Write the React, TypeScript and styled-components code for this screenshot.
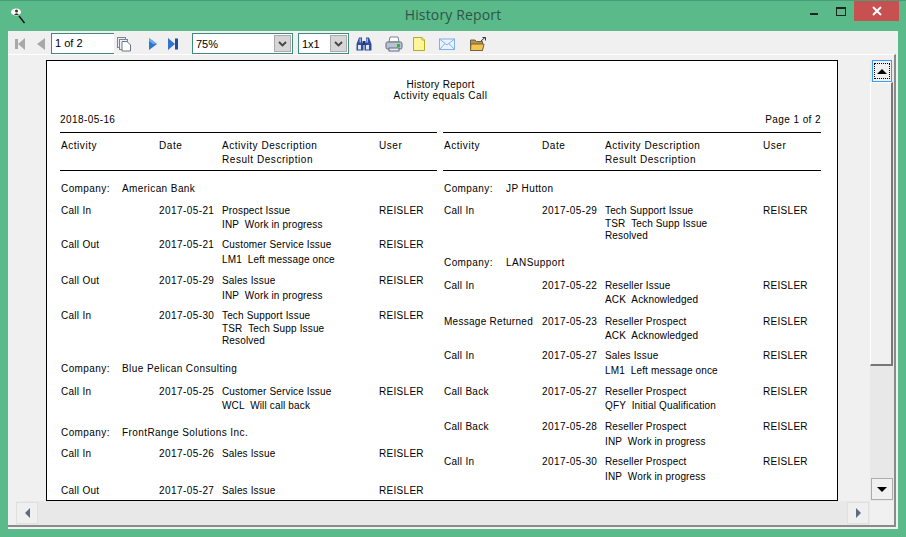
import React from 'react';
import styled, { createGlobalStyle } from 'styled-components';

const GlobalStyle = createGlobalStyle`
  html, body {
    margin: 0;
    padding: 0;
    background: #5aba8a;
  }
`;

const Window = styled.div`
  width: 906px;
  height: 537px;
  box-sizing: border-box;
  background: #5aba8a;
  border-top: 1px solid #4a9c76;
  display: flex;
  flex-direction: column;
  overflow: hidden;
  font-family: 'Liberation Sans', Arial, sans-serif;
`;

const TitleBar = styled.div`
  height: 30px;
  flex: none;
  display: grid;
  grid-template-columns: 1fr auto 1fr;
  position: relative;
`;

const AppIcon = styled.div`
  padding: 7px 0 0 9px;
`;

const Title = styled.div`
  font-family: 'Open Sans', 'Noto Sans', sans-serif;
  font-size: 14px;
  letter-spacing: 0.15px;
  line-height: 28px;
  color: #2f5547;
`;

const Controls = styled.div`
  display: flex;
  justify-content: flex-end;
  padding-right: 7px;
`;

const ControlButton = styled.div<{ $w: number; $close?: boolean }>`
  width: ${p => p.$w}px;
  height: 20px;
  display: flex;
  align-items: center;
  justify-content: center;
  background: ${p => (p.$close ? '#c75050' : 'transparent')};
`;

const Client = styled.div`
  width: 890px;
  height: 498px;
  margin-left: 8px;
  background: #f0f0f0;
  display: flex;
  flex-direction: column;
`;

const Toolbar = styled.div`
  height: 24px;
  flex: none;
  box-sizing: border-box;
  padding: 2px 0 1px 6px;
  display: flex;
  align-items: center;
`;

const ToolIcon = styled.svg<{ $ml: number }>`
  margin-left: ${p => p.$ml}px;
  flex: none;
  display: block;
`;

const PageInput = styled.div`
  width: 63px;
  height: 21px;
  margin-left: 4px;
  box-sizing: border-box;
  background: #fff;
  border: 1px solid #3f8a7a;
  border-right: none;
  font-size: 11px;
  line-height: 19px;
  padding-left: 3px;
  color: #000;
`;

const Combo = styled.div<{ $w: number; $ml: number }>`
  width: ${p => p.$w}px;
  height: 21px;
  margin-left: ${p => p.$ml}px;
  box-sizing: border-box;
  background: #fff;
  border: 1px solid #3f8a7a;
  display: flex;
  align-items: center;
  justify-content: space-between;
  padding: 0 1px 0 3px;
  font-size: 11px;
  color: #000;
`;

const ComboArrow = styled.div`
  width: 17px;
  height: 17px;
  box-sizing: border-box;
  background: #d6d6d6;
  border: 1px solid #ababab;
  display: flex;
  align-items: center;
  justify-content: center;
`;

const Main = styled.div`
  width: 886px;
  height: 470px;
  flex: none;
  border-right: 2px solid #8a8a8a;
  border-bottom: 2px solid #8a8a8a;
  display: grid;
  grid-template-columns: 862px 24px;
  grid-template-rows: 446px 24px;
  border-top: 1px solid #fff;
  box-sizing: content-box;
  margin-top: -1px;
`;

const Viewport = styled.div`
  padding: 5px 0 0 38px;
  box-sizing: border-box;
  overflow: hidden;
`;

const Page = styled.div`
  width: 792px;
  height: 441px;
  box-sizing: border-box;
  border: 1px solid #000;
  background: #fff;
  overflow: hidden;
  padding: 18px 0 0 13px;
  color: #000;
  font-size: 10px;
  letter-spacing: 0.42px;
`;

const ReportTitle = styled.div<{ $spacing: number }>`
  width: 761px;
  text-align: center;
  line-height: 11px;
  letter-spacing: ${p => p.$spacing}px;
`;

const MetaRow = styled.div`
  width: 761px;
  display: flex;
  justify-content: space-between;
  line-height: 12px;
  margin-top: 13px;
`;

const Columns = styled.div`
  display: grid;
  grid-template-columns: 377px 378px;
  column-gap: 6px;
  margin-top: 6px;
`;

const Column = styled.div``;

const ColumnHead = styled.div`
  border-top: 1px solid #000;
  border-bottom: 1px solid #000;
  padding-top: 7px;
  height: 30px;
  letter-spacing: 0.55px;
`;

const Rows = styled.div`
  padding-top: 12px;
`;

const Row = styled.div<{ $h: number; $desc: number }>`
  height: ${p => p.$h}px;
  display: grid;
  grid-template-columns: 98px 63px ${p => p.$desc}px 1fr;
  padding-left: 1px;
  line-height: 12px;
  white-space: pre;
`;

const ActivityCell = styled.div`
  letter-spacing: 0.28px;
`;

const UserCell = styled.div`
  letter-spacing: 0.3px;
`;

const DescriptionCell = styled.div`
  letter-spacing: 0.15px;
`;

const Line = styled.div<{ $offset?: number }>`
  margin-top: ${p => (p.$offset ? p.$offset - 12 : 0)}px;
`;

const CompanyRow = styled.div<{ $h: number }>`
  height: ${p => p.$h}px;
  display: flex;
  padding-left: 1px;
  line-height: 12px;
`;

const CompanyLabel = styled.div<{ $w: number }>`
  width: ${p => p.$w}px;
  flex: none;
`;

const ScrollV = styled.div`
  display: flex;
  flex-direction: column;
  padding-top: 5px;
  padding-bottom: 1px;
  box-sizing: border-box;
  background: linear-gradient(#f0f0f0 5px, #e8e8e8 5px);
`;

const ScrollButton = styled.div<{ $focus?: boolean; $inset?: number }>`
  height: 22px;
  flex: none;
  box-sizing: border-box;
  margin: 0 ${p => p.$inset ?? 1}px 0 ${p => p.$inset ?? 1}px;
  background: #f0f0f0;
  border: 1px solid ${p => (p.$focus ? '#3a9bf4' : '#acacac')};
  display: flex;
  align-items: center;
  justify-content: center;
`;

const FocusRing = styled.div`
  width: 16px;
  height: 16px;
  box-sizing: border-box;
  border: 1px dotted #000;
  display: flex;
  align-items: center;
  justify-content: center;
`;

const Thumb = styled.div`
  height: 284px;
  flex: none;
  margin-right: 1px;
  box-sizing: border-box;
  background: #f0f0f0;
  border-top: 1px solid #fff;
  border-left: 1px solid #fff;
  border-right: 2px solid #777;
  border-bottom: 2px solid #777;
`;

const Track = styled.div`
  flex: 1;
`;

const ScrollH = styled.div`
  margin-left: 8px;
  padding-top: 1px;
  box-sizing: border-box;
  background: #e8e8e8;
  display: flex;
  justify-content: space-between;
  padding-right: 1px;
`;

const HButton = styled.div`
  width: 22px;
  height: 22px;
  box-sizing: border-box;
  border: 1px solid #e0e0e0;
  background: #efefef;
  display: flex;
  align-items: center;
  justify-content: center;
`;

const Arrow = styled.div<{ $dir: 'up' | 'down' | 'left' | 'right' }>`
  width: 0;
  height: 0;
  ${p =>
    p.$dir === 'up'
      ? 'border-left: 5px solid transparent; border-right: 5px solid transparent; border-bottom: 5px solid #000;'
      : p.$dir === 'down'
      ? 'border-left: 5px solid transparent; border-right: 5px solid transparent; border-top: 5px solid #000;'
      : p.$dir === 'left'
      ? 'border-top: 5px solid transparent; border-bottom: 5px solid transparent; border-right: 5px solid #5c6a86;'
      : 'border-top: 5px solid transparent; border-bottom: 5px solid transparent; border-left: 5px solid #5c6a86;'}
`;

const Corner = styled.div``;

type Item =
  | { company: string; h: number }
  | { activity: string; date: string; lines: [string, number][]; h: number };

const leftRows: Item[] = [
  { company: 'American Bank', h: 22 },
  { activity: 'Call In', date: '2017-05-21', lines: [['Prospect Issue', 0], ['INP  Work in progress', 14]], h: 34 },
  { activity: 'Call Out', date: '2017-05-21', lines: [['Customer Service Issue', 0], ['LM1  Left message once', 15]], h: 36 },
  { activity: 'Call Out', date: '2017-05-29', lines: [['Sales Issue', 0], ['INP  Work in progress', 15]], h: 35 },
  { activity: 'Call In', date: '2017-05-30', lines: [['Tech Support Issue', 0], ['TSR  Tech Supp Issue', 13], ['Resolved', 12]], h: 53 },
  { company: 'Blue Pelican Consulting', h: 23 },
  { activity: 'Call In', date: '2017-05-25', lines: [['Customer Service Issue', 0], ['WCL  Will call back', 14]], h: 41 },
  { company: 'FrontRange Solutions Inc.', h: 21 },
  { activity: 'Call In', date: '2017-05-26', lines: [['Sales Issue', 0]], h: 37 },
  { activity: 'Call Out', date: '2017-05-27', lines: [['Sales Issue', 0]], h: 12 },
];

const rightRows: Item[] = [
  { company: 'JP Hutton', h: 22 },
  { activity: 'Call In', date: '2017-05-29', lines: [['Tech Support Issue', 0], ['TSR  Tech Supp Issue', 13], ['Resolved', 12]], h: 52 },
  { company: 'LANSupport', h: 23 },
  { activity: 'Call In', date: '2017-05-22', lines: [['Reseller Issue', 0], ['ACK  Acknowledged', 14]], h: 36 },
  { activity: 'Message Returned', date: '2017-05-23', lines: [['Reseller Prospect', 0], ['ACK  Acknowledged', 14]], h: 34 },
  { activity: 'Call In', date: '2017-05-27', lines: [['Sales Issue', 0], ['LM1  Left message once', 15]], h: 36 },
  { activity: 'Call Back', date: '2017-05-27', lines: [['Reseller Prospect', 0], ['QFY  Initial Qualification', 14]], h: 35 },
  { activity: 'Call Back', date: '2017-05-28', lines: [['Reseller Prospect', 0], ['INP  Work in progress', 15]], h: 35 },
  { activity: 'Call In', date: '2017-05-30', lines: [['Reseller Prospect', 0], ['INP  Work in progress', 15]], h: 30 },
];

const ReportColumn: React.FC<{ rows: Item[]; desc: number; label: number }> = ({ rows, desc, label }) => (
  <Column>
    <ColumnHead>
      <Row $h={14} $desc={desc}>
        <div>Activity</div>
        <div>Date</div>
        <div>Activity Description</div>
        <div>User</div>
      </Row>
      <Row $h={14} $desc={desc}>
        <div />
        <div />
        <div>Result Description</div>
        <div />
      </Row>
    </ColumnHead>
    <Rows>
      {rows.map((r, i) =>
        'company' in r ? (
          <CompanyRow key={i} $h={r.h}>
            <CompanyLabel $w={label}>Company:</CompanyLabel>
            <div>{r.company}</div>
          </CompanyRow>
        ) : (
          <Row key={i} $h={r.h} $desc={desc}>
            <ActivityCell>{r.activity}</ActivityCell>
            <div>{r.date}</div>
            <DescriptionCell>
              {r.lines.map(([text, offset], j) => (
                <Line key={j} $offset={offset}>{text}</Line>
              ))}
            </DescriptionCell>
            <UserCell>REISLER</UserCell>
          </Row>
        )
      )}
    </Rows>
  </Column>
);

const Chevron = () => (
  <svg width="9" height="6" viewBox="0 0 9 6">
    <path d="M1 1 L4.5 4.5 L8 1" fill="none" stroke="#444" strokeWidth="1.8" />
  </svg>
);

const App: React.FC = () => (
  <Window>
    <GlobalStyle />
    <TitleBar>
      <AppIcon>
        <svg width="18" height="18" viewBox="0 0 18 18" style={{ display: 'block' }}>
          <ellipse cx="7" cy="4" rx="5" ry="3.6" fill="#fff" />
          <circle cx="7.5" cy="3" r="1.5" fill="#4a2c20" />
          <path d="M5 7 Q7.5 3.5 10 7 Z" fill="#333" />
          <path d="M10 8 L15.5 15" stroke="#111" strokeWidth="1.4" />
        </svg>
      </AppIcon>
      <Title>History Report</Title>
      <Controls>
        <ControlButton $w={28}>
          <svg width="10" height="10" viewBox="0 0 10 10"><rect x="1" y="7" width="8" height="2" fill="#222" /></svg>
        </ControlButton>
        <ControlButton $w={26}>
          <svg width="10" height="9" viewBox="0 0 10 9"><rect x="0.5" y="0.5" width="9" height="8" fill="none" stroke="#222" /><rect x="0" y="0" width="10" height="2" fill="#222" /></svg>
        </ControlButton>
        <ControlButton $w={45} $close>
          <svg width="10" height="10" viewBox="0 0 10 10"><path d="M1 1 L9 9 M9 1 L1 9" stroke="#fff" strokeWidth="2" /></svg>
        </ControlButton>
      </Controls>
    </TitleBar>
    <Client>
      <Toolbar>
        <ToolIcon $ml={0} width="12" height="14" viewBox="0 0 12 14">
          <rect x="1" y="2" width="3" height="10" fill="#a8a8a8" />
          <path d="M11 1 L11 13 L4 7 Z" fill="#a8a8a8" />
        </ToolIcon>
        <ToolIcon $ml={9} width="12" height="14" viewBox="0 0 12 14">
          <path d="M10 1 L10 13 L2 7 Z" fill="#a8a8a8" />
        </ToolIcon>
        <PageInput>1 of 2</PageInput>
        <ToolIcon $ml={2} width="16" height="16" viewBox="0 0 16 16">
          <rect x="1.5" y="1.5" width="8" height="10" fill="#e8eaf0" stroke="#7d8496" />
          <rect x="3.5" y="3.5" width="8" height="10" fill="#eef0f5" stroke="#7d8496" />
          <path d="M6 5.5 H11 L14.5 9 V15 H6 Z" fill="#fff" stroke="#6d7488" />
        </ToolIcon>
        <ToolIcon $ml={15} width="12" height="14" viewBox="0 0 12 14">
          <path d="M2 1 L10 7 L2 13 Z" fill="#2e74d0" />
          <path d="M2 1 L10 7 L6 7 L2 4 Z" fill="#6aa8ee" />
        </ToolIcon>
        <ToolIcon $ml={8} width="12" height="14" viewBox="0 0 12 14">
          <path d="M1 1 L8 7 L1 13 Z" fill="#2e74d0" />
          <rect x="8" y="1.5" width="3" height="11" fill="#1d4f9e" />
        </ToolIcon>
        <Combo $w={101} $ml={13}>
          75%
          <ComboArrow><Chevron /></ComboArrow>
        </Combo>
        <Combo $w={51} $ml={5}>
          1x1
          <ComboArrow><Chevron /></ComboArrow>
        </Combo>
        <ToolIcon $ml={6} width="18" height="16" viewBox="0 0 18 16">
          <path d="M4 1.5 H7 V7 H8.5 V14.5 H1.5 V8 Z" fill="#2f4f9c" />
          <path d="M11 1.5 H14 L16.5 8 V14.5 H9.5 V7 H11 Z" fill="#2f4f9c" />
          <rect x="7.5" y="5" width="3" height="4" fill="#1e3570" />
          <rect x="4.5" y="2.5" width="1.5" height="4" fill="#9db5e6" />
          <rect x="11.5" y="2.5" width="1.5" height="4" fill="#9db5e6" />
          <rect x="3" y="9" width="3" height="4.5" fill="#dfe8fa" />
          <rect x="11" y="9" width="3" height="4.5" fill="#dfe8fa" />
        </ToolIcon>
        <ToolIcon $ml={12} width="18" height="16" viewBox="0 0 18 16">
          <path d="M5 1 H13 L14 6 H4 Z" fill="#fff" stroke="#7a8499" />
          <rect x="1" y="6" width="16" height="7" rx="1.5" fill="#b9c2d1" stroke="#5f6b80" />
          <rect x="4" y="12" width="10" height="3" fill="#e8ebf0" stroke="#5f6b80" />
          <rect x="12" y="8" width="3" height="3" fill="#1ec21e" />
        </ToolIcon>
        <ToolIcon $ml={8} width="16" height="16" viewBox="0 0 16 16">
          <path d="M2.5 1.5 H11 L13.5 4 V14.5 H2.5 Z" fill="#fdf59a" stroke="#b3ac1c" />
          <path d="M11 1.5 V4 H13.5" fill="#fffbd0" stroke="#b3ac1c" />
        </ToolIcon>
        <ToolIcon $ml={11} width="18" height="16" viewBox="0 0 18 16">
          <rect x="1.5" y="3" width="15" height="10.5" fill="#eaf3fe" stroke="#7fb2ea" />
          <path d="M1.5 3 L9 9 L16.5 3 M1.5 13.5 L7 7.5 M16.5 13.5 L11 7.5" fill="none" stroke="#7fb2ea" />
        </ToolIcon>
        <ToolIcon $ml={13} width="18" height="16" viewBox="0 0 18 16">
          <path d="M1.5 4 H6 L7.5 5.5 H13.5 V14.5 H1.5 Z" fill="#b98f42" stroke="#6f6248" />
          <path d="M2 8 H15 L13.5 14.5 H1.5 Z" fill="#f5c550" stroke="#6f6248" />
          <path d="M12 5 L16 1.5 M13.5 1.5 H16.5 V4.5" fill="none" stroke="#333" />
        </ToolIcon>
      </Toolbar>
      <Main>
        <Viewport>
          <Page>
            <ReportTitle $spacing={0.3}>History Report</ReportTitle>
            <ReportTitle $spacing={0.5}>Activity equals Call</ReportTitle>
            <MetaRow>
              <div>2018-05-16</div>
              <div>Page 1 of 2</div>
            </MetaRow>
            <Columns>
              <ReportColumn rows={leftRows} desc={157} label={61} />
              <ReportColumn rows={rightRows} desc={158} label={62} />
            </Columns>
          </Page>
        </Viewport>
        <ScrollV>
          <ScrollButton $focus $inset={2}>
            <FocusRing><Arrow $dir="up" /></FocusRing>
          </ScrollButton>
          <Thumb />
          <Track />
          <ScrollButton>
            <Arrow $dir="down" />
          </ScrollButton>
        </ScrollV>
        <ScrollH>
          <HButton><Arrow $dir="left" /></HButton>
          <HButton><Arrow $dir="right" /></HButton>
        </ScrollH>
        <Corner />
      </Main>
    </Client>
  </Window>
);

export default App;
